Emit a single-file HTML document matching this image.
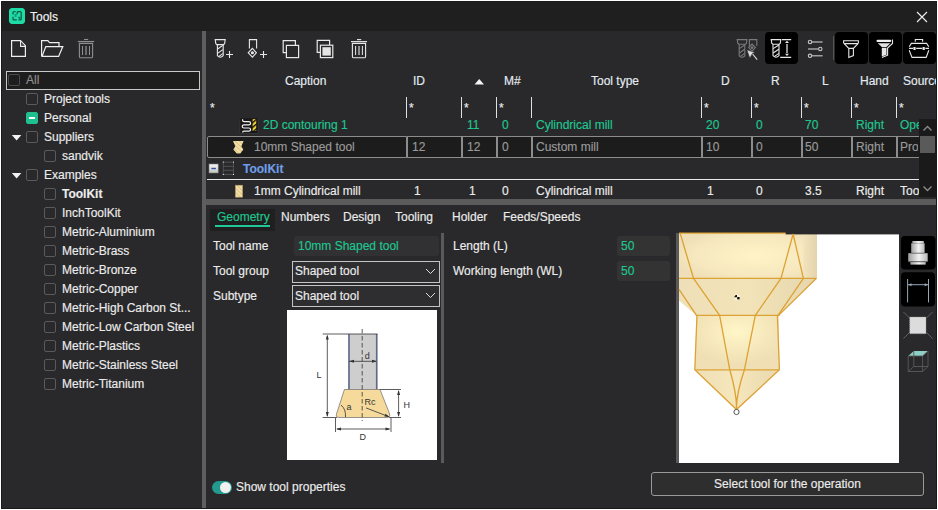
<!DOCTYPE html>
<html><head><meta charset="utf-8">
<style>
*{box-sizing:border-box;margin:0;padding:0}
html,body{width:938px;height:510px;overflow:hidden;background:#fff}
body{font-family:"Liberation Sans",sans-serif;font-size:12px;color:#ececec;position:relative;-webkit-text-stroke:0.15px}
.a{position:absolute;white-space:nowrap;line-height:14px}
#win{position:absolute;left:1px;top:1px;width:936px;height:508px;background:#1a1a1a}
#main{position:absolute;left:2px;top:2px;width:934px;height:506px;background:#29292b}
#title{position:absolute;left:2px;top:2px;width:934px;height:29px;background:#1f1f1f}
.cb{position:absolute;width:12px;height:12px;border:1px solid #5a5a5a;border-radius:2px}
.tri{position:absolute;width:0;height:0;border-left:4.5px solid transparent;border-right:4.5px solid transparent;border-top:6px solid #eee}
.vl{position:absolute;width:1px;background:#e0e0e0}
.hd{color:#e4ebf2}
.g{color:#1fc790}
.sel{position:absolute;top:136px;height:22px;border:1px solid #8c8c8c;background:#1c1c1c}
.gr{color:#9a9a9a}
</style></head><body>
<div id="win"></div>
<div id="main"></div>
<div id="title"></div>
<!-- title -->
<div style="position:absolute;left:9px;top:8px;width:16px;height:16px;border-radius:4px;background:#1fd69e"></div>
<div class="a" style="left:30px;top:10px;color:#f2f2f2">Tools</div>
<svg style="position:absolute;left:915px;top:10px" width="14" height="14"><path d="M2 2L12 12M12 2L2 12" stroke="#f0f0f0" stroke-width="1.1"/></svg>

<!-- left dividers -->
<div style="position:absolute;left:202px;top:31px;width:4px;height:477px;background:#5e5e5e"></div>

<!-- All box -->
<div style="position:absolute;left:6px;top:71px;width:194px;height:19px;border:1px solid #c8c8c8;background:#1e1e1e"></div>
<div class="cb" style="left:8px;top:74px;border-color:#4a4a4a"></div>
<div class="a" style="left:26px;top:73px;color:#8e8e8e">All</div>

<!-- tree -->
<div class="cb" style="left:26px;top:93px"></div><div class="a" style="left:44px;top:92px">Project tools</div>
<div class="cb" style="left:26px;top:112px;background:#1fbf8f;border-color:#1fbf8f"></div><div style="position:absolute;left:29px;top:117px;width:6px;height:2px;background:#fff"></div><div class="a" style="left:44px;top:111px">Personal</div>
<svg style="position:absolute;left:11px;top:134px" width="12" height="8"><path d="M0.8 1H10.4L5.6 6.4Z" fill="#f2f2f2"/></svg><div class="cb" style="left:26px;top:131px"></div><div class="a" style="left:44px;top:130px">Suppliers</div>
<div class="cb" style="left:44px;top:150px"></div><div class="a" style="left:62px;top:149px">sandvik</div>
<svg style="position:absolute;left:11px;top:172px" width="12" height="8"><path d="M0.8 1H10.4L5.6 6.4Z" fill="#f2f2f2"/></svg><div class="cb" style="left:26px;top:169px"></div><div class="a" style="left:44px;top:168px">Examples</div>
<div class="cb" style="left:44px;top:188px"></div><div class="a" style="left:62px;top:187px;font-weight:bold">ToolKit</div>
<div class="cb" style="left:44px;top:207px"></div><div class="a" style="left:62px;top:206px">InchToolKit</div>
<div class="cb" style="left:44px;top:226px"></div><div class="a" style="left:62px;top:225px">Metric-Aluminium</div>
<div class="cb" style="left:44px;top:245px"></div><div class="a" style="left:62px;top:244px">Metric-Brass</div>
<div class="cb" style="left:44px;top:264px"></div><div class="a" style="left:62px;top:263px">Metric-Bronze</div>
<div class="cb" style="left:44px;top:283px"></div><div class="a" style="left:62px;top:282px">Metric-Copper</div>
<div class="cb" style="left:44px;top:302px"></div><div class="a" style="left:62px;top:301px">Metric-High Carbon St...</div>
<div class="cb" style="left:44px;top:321px"></div><div class="a" style="left:62px;top:320px">Metric-Low Carbon Steel</div>
<div class="cb" style="left:44px;top:340px"></div><div class="a" style="left:62px;top:339px">Metric-Plastics</div>
<div class="cb" style="left:44px;top:359px"></div><div class="a" style="left:62px;top:358px">Metric-Stainless Steel</div>
<div class="cb" style="left:44px;top:378px"></div><div class="a" style="left:62px;top:377px">Metric-Titanium</div>

<!-- table header -->
<div class="a hd" style="left:285px;top:74px">Caption</div>
<div class="a hd" style="left:413px;top:74px">ID</div>
<svg style="position:absolute;left:474px;top:78px" width="11" height="7"><path d="M0.5 6.5L5.25 1L10 6.5Z" fill="#f4f4f4"/></svg>
<div class="a hd" style="left:504px;top:74px">M#</div>
<div class="a hd" style="left:591px;top:74px">Tool type</div>
<div class="a hd" style="left:721px;top:74px">D</div>
<div class="a hd" style="left:771px;top:74px">R</div>
<div class="a hd" style="left:822px;top:74px">L</div>
<div class="a hd" style="left:860px;top:74px">Hand</div>
<div class="a hd" style="left:903px;top:74px;width:33px;overflow:hidden">Source</div>

<!-- filter row -->
<div class="a" style="left:210px;top:101px;font-size:12px">*</div>
<div class="vl" style="left:406px;top:97px;height:21px"></div><div class="a" style="left:409px;top:101px;font-size:12px">*</div>
<div class="vl" style="left:461px;top:97px;height:21px"></div><div class="a" style="left:464px;top:101px;font-size:12px">*</div>
<div class="vl" style="left:496px;top:97px;height:21px"></div><div class="a" style="left:499px;top:101px;font-size:12px">*</div>
<div class="vl" style="left:531px;top:97px;height:21px"></div>
<div class="vl" style="left:701px;top:97px;height:21px"></div><div class="a" style="left:704px;top:101px;font-size:12px">*</div>
<div class="vl" style="left:751px;top:97px;height:21px"></div><div class="a" style="left:754px;top:101px;font-size:12px">*</div>
<div class="vl" style="left:801px;top:97px;height:21px"></div><div class="a" style="left:804px;top:101px;font-size:12px">*</div>
<div class="vl" style="left:851px;top:97px;height:21px"></div><div class="a" style="left:854px;top:101px;font-size:12px">*</div>
<div class="vl" style="left:896px;top:97px;height:21px"></div><div class="a" style="left:899px;top:101px;font-size:12px">*</div>

<!-- row1 -->
<div class="a g" style="left:263px;top:118px">2D contouring 1</div>
<div class="a g" style="left:467px;top:118px">11</div>
<div class="a g" style="left:502px;top:118px">0</div>
<div class="a g" style="left:536px;top:118px">Cylindrical mill</div>
<div class="a g" style="left:706px;top:118px">20</div>
<div class="a g" style="left:756px;top:118px">0</div>
<div class="a g" style="left:805px;top:118px">70</div>
<div class="a g" style="left:856px;top:118px">Right</div>
<div class="a g" style="left:900px;top:118px;width:19px;overflow:hidden">Open</div>

<!-- row2 selected -->
<div class="sel" style="left:207px;width:200px;border-radius:2px 0 0 2px"></div>
<div class="sel" style="left:407px;width:55px"></div>
<div class="sel" style="left:462px;width:35px"></div>
<div class="sel" style="left:497px;width:35px"></div>
<div class="sel" style="left:532px;width:170px"></div>
<div class="sel" style="left:702px;width:50px"></div>
<div class="sel" style="left:752px;width:50px"></div>
<div class="sel" style="left:802px;width:50px"></div>
<div class="sel" style="left:852px;width:45px"></div>
<div class="sel" style="left:897px;width:24px"></div>
<div class="a gr" style="left:254px;top:140px">10mm Shaped tool</div>
<div class="a gr" style="left:412px;top:140px">12</div>
<div class="a gr" style="left:467px;top:140px">12</div>
<div class="a gr" style="left:502px;top:140px">0</div>
<div class="a gr" style="left:536px;top:140px">Custom mill</div>
<div class="a gr" style="left:706px;top:140px">10</div>
<div class="a gr" style="left:756px;top:140px">0</div>
<div class="a gr" style="left:805px;top:140px">50</div>
<div class="a gr" style="left:856px;top:140px">Right</div>
<div class="a gr" style="left:900px;top:140px;width:18px;overflow:hidden">Pro</div>

<!-- ToolKit group row -->
<div class="a" style="left:243px;top:162px;color:#6f9ee8;font-weight:bold">ToolKit</div>
<div style="position:absolute;left:207px;top:179px;width:712px;height:1px;background:#e8e8e8"></div>

<!-- row4 -->
<div class="a" style="left:254px;top:184px">1mm Cylindrical mill</div>
<div class="a" style="left:414px;top:184px">1</div>
<div class="a" style="left:469px;top:184px">1</div>
<div class="a" style="left:502px;top:184px">0</div>
<div class="a" style="left:536px;top:184px">Cylindrical mill</div>
<div class="a" style="left:707px;top:184px">1</div>
<div class="a" style="left:756px;top:184px">0</div>
<div class="a" style="left:805px;top:184px">3.5</div>
<div class="a" style="left:856px;top:184px">Right</div>
<div class="a" style="left:900px;top:184px;width:19px;overflow:hidden">Tool</div>

<!-- scrollbar -->
<div style="position:absolute;left:919px;top:119px;width:17px;height:78px;background:#1a1a1a"></div>
<div style="position:absolute;left:920px;top:136px;width:15px;height:17px;background:#5a5a5a"></div>
<svg style="position:absolute;left:919px;top:119px" width="17" height="78"><path d="M4.5 11.5L8.5 7.5L12.5 11.5M4.5 67.5L8.5 71.5L12.5 67.5" fill="none" stroke="#8a8a8a" stroke-width="1.4"/></svg>

<!-- splitter -->
<div style="position:absolute;left:206px;top:199px;width:730px;height:6px;background:#5b5b5b"></div>

<!-- tabs -->
<div style="position:absolute;left:210px;top:209px;width:65px;height:22px;background:#1f1f1f"></div>
<div style="position:absolute;left:215px;top:225px;width:55px;height:2px;background:#20c997"></div>
<div class="a g" style="left:217px;top:210px">Geometry</div>
<div class="a" style="left:281px;top:210px">Numbers</div>
<div class="a" style="left:343px;top:210px">Design</div>
<div class="a" style="left:395px;top:210px">Tooling</div>
<div class="a" style="left:452px;top:210px">Holder</div>
<div class="a" style="left:503px;top:210px">Feeds/Speeds</div>

<!-- form -->
<div class="a" style="left:213px;top:239px">Tool name</div>
<div style="position:absolute;left:294px;top:236px;width:145px;height:20px;background:#313133;border-radius:3px"></div>
<div class="a g" style="left:298px;top:239px">10mm Shaped tool</div>
<div class="a" style="left:213px;top:264px">Tool group</div>
<div style="position:absolute;left:292px;top:261px;width:148px;height:22px;border:1px solid #c4c4c4;background:#2e2e30"></div>
<div class="a" style="left:295px;top:264px">Shaped tool</div>
<svg style="position:absolute;left:425px;top:268px" width="11" height="7"><path d="M1 1L5.5 5.5L10 1" fill="none" stroke="#ddd" stroke-width="1"/></svg>
<div class="a" style="left:213px;top:289px">Subtype</div>
<div style="position:absolute;left:292px;top:285px;width:148px;height:22px;border:1px solid #c4c4c4;background:#2e2e30"></div>
<div class="a" style="left:295px;top:289px">Shaped tool</div>
<svg style="position:absolute;left:425px;top:292px" width="11" height="7"><path d="M1 1L5.5 5.5L10 1" fill="none" stroke="#ddd" stroke-width="1"/></svg>

<div style="position:absolute;left:287px;top:310px;width:150px;height:150px;background:#fff"></div>
<div style="position:absolute;left:441px;top:233px;width:3px;height:230px;background:#5a5a5a"></div>

<div class="a" style="left:453px;top:239px">Length (L)</div>
<div class="a" style="left:453px;top:264px">Working length (WL)</div>
<div style="position:absolute;left:617px;top:236px;width:53px;height:20px;background:#333;border-radius:3px"></div>
<div style="position:absolute;left:617px;top:261px;width:53px;height:20px;background:#333;border-radius:3px"></div>
<div class="a g" style="left:621px;top:239px">50</div>
<div class="a g" style="left:621px;top:264px">50</div>

<!-- 3d view -->
<div style="position:absolute;left:676px;top:233px;width:3px;height:230px;background:#5a5a5a"></div>
<div style="position:absolute;left:679px;top:233px;width:220px;height:230px;background:#fff"></div>


<!-- DRAWINGS -->
<svg style="position:absolute;left:0;top:0" width="938" height="510">
 <defs>
  <radialGradient id="gTop" cx="0.55" cy="0.5" r="0.6">
   <stop offset="0" stop-color="#fff4c6"/><stop offset="0.7" stop-color="#f7e8bf"/><stop offset="1" stop-color="#efdfb8"/>
  </radialGradient>
  <linearGradient id="gRight" x1="0" y1="0" x2="1" y2="0"><stop offset="0" stop-color="#f2e3bc"/><stop offset="1" stop-color="#e4d4ae"/></linearGradient>
  <linearGradient id="gTaper" x1="0" y1="0" x2="1" y2="0">
   <stop offset="0" stop-color="#eedfb8"/><stop offset="0.5" stop-color="#f3e3b8"/><stop offset="1" stop-color="#e6d6ae"/>
  </linearGradient>
  <radialGradient id="gCyl" cx="0.5" cy="0.3" r="0.6">
   <stop offset="0" stop-color="#fff6c8"/><stop offset="1" stop-color="#f0dfb4"/>
  </radialGradient>
  <linearGradient id="gCone" x1="0" y1="0" x2="1" y2="0">
   <stop offset="0" stop-color="#efdfb6"/><stop offset="0.5" stop-color="#f6e6bc"/><stop offset="1" stop-color="#e9d8ae"/>
  </linearGradient>
 </defs>
 <!-- 3D tool -->
 <path d="M679 233H817V278.3H679Z" fill="url(#gTop)"/>
 <path d="M803.4 233H817V278.3H803.4Z" fill="url(#gRight)"/>
 <path d="M679 278.3H816.4L778.6 315.4H696.5L679 300.6Z" fill="url(#gTaper)"/>
 <path d="M696.5 315.4H778.6L779.4 369.8H694.8Z" fill="url(#gCyl)"/>
 <path d="M694.8 369.8H779.4L736.5 409.5Z" fill="url(#gCone)"/>
 <rect x="785.6" y="228" width="114" height="6.4" fill="#29292b"/>
 <g stroke="#dca233" stroke-width="1.3" fill="none">
  <path d="M679 233.2H785.6"/>
  <path d="M680.1 233L693.5 278.3M793.1 234L781 278.3M793.1 234L803.4 278.3"/>
  <path d="M679 278.3H816.4"/>
  <path d="M679 289.4L696.5 315.4M693.5 278.3L719.6 315.4M781 278.3L755.3 315.4M803.4 278.3L778 315.4M816.4 278.3L778.6 315.4"/>
  <path d="M696 315.4H779.4"/>
  <path d="M697 315.4L694.8 369.8M777.4 315.4L779.4 369.8M719.6 315.4L729.8 369.8M755.3 315.4L744.4 369.8"/>
  <path d="M694.8 369.8H779.4"/>
  <path d="M694.8 369.8L736.5 409.5L779.4 369.8M729.8 369.8Q737 395 736.5 409.5M744.4 369.8Q736 395 736.5 409.5"/>
 </g>
 <circle cx="736.5" cy="412" r="2.6" fill="#fff" stroke="#555" stroke-width="1"/>
 <circle cx="737" cy="297.2" r="3.2" fill="#fff8e0" opacity="0.7"/><path d="M734 297.2L735.6 295H737V297.2Z" fill="#111"/><rect x="737.2" y="297" width="2.4" height="2.4" fill="#111"/>

 <!-- schematic -->
 <rect x="348.2" y="334" width="29.3" height="55.5" fill="#cecece"/>
 <path d="M349 334V389.5M376.7 334V389.5" stroke="#5e6a86" stroke-width="1.6"/>
 <path d="M344.4 389.5H380L388.5 411Q391.5 417.5 387 417.5H339Q334.5 417.5 337.5 411Z" fill="#f6da9c" stroke="#6a6a6a" stroke-width="0.7"/>
 <g stroke="#333" stroke-width="0.8" fill="none">
  <path d="M322.7 334H377.5"/>
  <path d="M327.3 336V416"/>
  <path d="M322.7 417.5H337"/>
  <path d="M380 389.5H401M389 417.5H401"/>
  <path d="M398.6 391V416"/>
  <path d="M335.5 418V432M391 418V432"/>
  <path d="M337 429H389.5"/>
  <path d="M349.5 361.3H376"/>
  <path d="M362.2 329V421" stroke-dasharray="4.5 2.5"/>
  <path d="M366 407.9L389 416.8"/>
  <path d="M341 405Q346 409 345.5 417"/>
 </g>
 <g fill="#333">
  <path d="M327.3 334.5L325.8 339.5H328.8Z M327.3 417L325.8 412H328.8Z"/>
  <path d="M398.6 390L397.1 395H400.1Z M398.6 417L397.1 412H400.1Z"/>
  <path d="M336 429L341 427.5V430.5Z M390.5 429L385.5 427.5V430.5Z"/>
  <path d="M349 361.3L354 359.8V362.8Z M377 361.3L372 359.8V362.8Z"/>
  <path d="M389.5 417L384.4 416.6L385.5 413.8Z"/>
 </g>
 <g font-family="Liberation Sans, sans-serif" font-size="9" fill="#333">
  <text x="364.8" y="359">d</text>
  <text x="316.6" y="378">L</text>
  <text x="403.5" y="408">H</text>
  <text x="359.5" y="439.5">D</text>
  <text x="346.5" y="409.5">a</text>
  <text x="364.5" y="404.5">Rc</text>
 </g>
</svg>
<!-- right side buttons -->


<svg style="position:absolute;left:0;top:0" width="938" height="510" fill="none">
 <defs>
  <pattern id="stripe" width="3" height="3" patternUnits="userSpaceOnUse" patternTransform="rotate(-45)">
   <rect width="3" height="3" fill="#f3dea6"/><rect width="1" height="3" fill="#dcc48a"/>
  </pattern>
  <pattern id="ystripe" width="3.6" height="4" patternUnits="userSpaceOnUse" patternTransform="rotate(50)">
   <rect width="4" height="4" fill="#f4d430"/><rect width="1.4" height="4" fill="#111"/>
  </pattern>
  <linearGradient id="metal" x1="0" y1="0" x2="1" y2="0">
   <stop offset="0" stop-color="#9e9e9e"/><stop offset="0.55" stop-color="#f2f2f2"/><stop offset="1" stop-color="#b8b8b8"/>
  </linearGradient>
  <linearGradient id="mbox" x1="0" y1="0" x2="0" y2="1">
   <stop offset="0" stop-color="#f6f6f6"/><stop offset="1" stop-color="#c4c4c4"/>
  </linearGradient>
 </defs>
 <!-- 2D contouring icon -->
 <rect x="239.5" y="118.4" width="19" height="15.6" fill="#171717"/>
 <path d="M239.8 119V133.6H258.2V119" stroke="#404040" stroke-width="0.8"/>
 <path d="M242.6 119.3V120.3Q242.6 121.6 244 121.6H248.8Q250.6 121.6 250.6 123.3Q250.6 124.9 248.8 124.9H244Q242.2 124.9 242.2 126.5Q242.2 128 244 128H248.8Q250.6 128 250.6 129.6Q250.6 131.2 248.8 131.2H244Q242.6 131.2 242.6 132.4" stroke="#f4f4f4" stroke-width="1.2"/>
 <rect x="252.6" y="119.2" width="3.6" height="11.8" fill="url(#ystripe)"/>
 <!-- shaped tool icon -->
 <path d="M233 141H243.6L241.4 146.2L243.3 149.6L240.3 153.5H236.8L233.3 149.6L235.3 146.2Z" fill="url(#stripe)"/>
 <!-- minus box -->
 <rect x="209" y="164" width="9.2" height="9" fill="url(#mbox)" stroke="#7a7a7a" stroke-width="0.6"/>
 <path d="M211.4 168.5H215.9" stroke="#2f4fa8" stroke-width="1.4"/>
 <!-- table icon -->
 <path d="M223.3 162V174.5M233.4 162V174.5M223.3 162.2H233.4M223.3 166.3H233.4M223.3 170.3H233.4M223.3 174.4H233.4" stroke="#5a5a5a" stroke-width="0.8"/>
 <g fill="#e8e8e8"><rect x="222.8" y="161.6" width="1" height="1"/><rect x="233" y="161.6" width="1" height="1"/><rect x="222.8" y="174" width="1" height="1"/><rect x="233" y="174" width="1" height="1"/></g>
 <!-- cyl mill icon -->
 <rect x="235.4" y="185.2" width="7.2" height="12" fill="url(#stripe)" stroke="#b49a68" stroke-width="0.6"/>

 <!-- right view buttons -->
 <rect x="901" y="236" width="34.5" height="33.5" rx="4" fill="#000"/>
 <rect x="901" y="272.2" width="34" height="34.3" rx="4" fill="#000"/>
 <rect x="912.3" y="241" width="11.5" height="2" fill="url(#metal)"/>
 <rect x="911.2" y="243.2" width="13.4" height="9.8" fill="url(#metal)"/>
 <rect x="908.2" y="253.2" width="19.5" height="8.4" fill="url(#metal)"/>
 <rect x="910.4" y="262" width="15.3" height="2.6" fill="url(#metal)"/>
 <path d="M911.2 253.1H924.6M908.2 261.8H927.7" stroke="#555" stroke-width="0.6"/>
 <g stroke="#98a6b6" stroke-width="1">
  <path d="M907.6 279V302.4M928.5 279V302.4M908 284.7H928"/>
 </g>
 <path d="M908.2 284.7L911.5 283.2V286.2Z M928 284.7L924.7 283.2V286.2Z" fill="#98a6b6"/>
 <!-- square view -->
 <path d="M903.5 312L909.5 318M932.5 312L926.5 318M903.5 338.5L909.5 332.5M932.5 338.5L926.5 332.5" stroke="#666" stroke-width="0.9"/>
 <rect x="909.7" y="317" width="16.3" height="16.7" fill="#dcdcdc" stroke="#9a9a9a" stroke-width="0.7" stroke-dasharray="1 1"/>
 <!-- cube -->
 <path d="M908.2 356L913.8 351H928L922.6 356Z" fill="#8ecfc6"/>
 <g stroke="#5a5a5a" stroke-width="0.9">
  <path d="M908.2 356H922.6V371.5H908.2Z M922.6 356L928 351V366.5L922.6 371.5 M928 366.5H913.8L908.2 371.5 M913.8 351V366.5"/>
 </g>
</svg>
<!-- bottom -->
<div style="position:absolute;left:212px;top:481px;width:20px;height:13px;border-radius:7px;background:#249a8f"></div>
<div style="position:absolute;left:220px;top:482px;width:11px;height:11px;border-radius:6px;background:#f0f0f0"></div>
<div class="a" style="left:236px;top:480px">Show tool properties</div>
<div style="position:absolute;left:651px;top:472px;width:273px;height:24px;border:1px solid #9a9a9a;border-radius:3px;background:#2e2e2e"></div>
<div class="a" style="left:651px;top:477px;width:273px;text-align:center">Select tool for the operation</div>

<!-- right toolbar -->
<div style="position:absolute;left:765px;top:32px;width:33px;height:32px;background:#000;border-radius:4px"></div>
<div style="position:absolute;left:835px;top:32px;width:33px;height:32px;background:#000;border-radius:4px"></div>
<div style="position:absolute;left:869px;top:32px;width:33px;height:32px;background:#000;border-radius:4px"></div>
<div style="position:absolute;left:903px;top:32px;width:33px;height:32px;background:#000;border-radius:4px"></div>
<div style="position:absolute;left:833px;top:36px;width:1px;height:24px;background:#555"></div>

<!-- ICONS -->
<svg style="position:absolute;left:0;top:0" width="938" height="510" fill="none" stroke-linejoin="miter">
 <!-- app icon -->
 <rect x="9" y="8" width="16" height="16" rx="4" fill="#1ddca6" stroke="none"/>
 <path d="M13 14.4V12.5Q13 11.6 14 11.6H15.6M13 16.8V19Q13 19.9 14 19.9H16.8M17.2 14.2V12.5Q17.2 11.6 18.2 11.6H20.2Q21.2 11.6 21.2 12.6V19Q21.2 19.9 20.2 19.9H18.4M18.6 17L20.1 18.5" stroke="#0f5a44" stroke-width="1.25"/>
 <rect x="14.6" y="14" width="2" height="3" fill="#159a74" stroke="none"/>
 <!-- new file -->
 <path d="M11.6 40.6H20.5L25.4 45.8V56.4H11.6Z" stroke="#eeeeee" stroke-width="1.2"/>
 <path d="M20.6 41V46.4H25" stroke="#eeeeee" stroke-width="1.1"/>
 <path d="M21.2 41.8L24.6 45.7H21.2Z" fill="#555" stroke="none"/>
 <!-- folder -->
 <path d="M41.6 56.4V40.6H47.8L49.6 42.6H59V46.4" stroke="#eeeeee" stroke-width="1.2"/>
 <path d="M41.6 56.4H58.6L62.8 46.6H45.8L42.2 56" stroke="#eeeeee" stroke-width="1.2"/>
 <!-- trash left -->
 <g stroke="#8f8f8f">
 <path d="M84 39.5H88.2" stroke-width="1.1"/>
 <path d="M77.8 41.5H94.2" stroke-width="1.1"/>
 <path d="M79.4 43.4H92.6V56.4Q92.6 57.8 91.2 57.8H80.8Q79.4 57.8 79.4 56.4Z" stroke-width="1.1"/>
 <path d="M82.5 46V55M89.5 46V55" stroke-width="1"/>
 <path d="M86 46V55" stroke="#6a6a6a" stroke-width="2"/>
 </g>

 <!-- right toolbar left icons -->
 <!-- mill + -->
 <g stroke="#e8e8e8" stroke-width="1.1">
 <path d="M215.2 39.6H225.2L224.6 43.6L223.4 44.6H217L215.8 43.6Z"/>
 <path d="M217.4 44.6V55.6Q220.3 58.8 223.2 55.6V44.6"/>
 <path d="M217.6 49L222.8 45.4M217.6 53.4L222.8 49.6M218.6 56.6L222.8 53.6"/>
 <path d="M226 54.5H233M229.5 51V58"/>
 </g>
 <!-- insert + -->
 <g stroke="#e8e8e8" stroke-width="1.1">
 <path d="M249.4 48.5V39.6H256.6V48.5"/>
 <path d="M252.4 48.4L256.4 52.8L252.4 57.2L248.2 52.8Z"/>
 <circle cx="252.4" cy="52.8" r="1" fill="#e8e8e8"/>
 <path d="M260 54.5H267M263.5 51V58"/>
 </g>
 <!-- copy -->
 <g stroke="#e8e8e8" stroke-width="1.2">
 <path d="M286 52.6H283.2V40.6H295.4V45.2"/>
 <rect x="286.4" y="45.4" width="12.2" height="12.2" fill="#29292b"/>
 </g>
 <!-- copy filled -->
 <g stroke="#e8e8e8" stroke-width="1.2">
 <path d="M320 52.4H317.2V40.4H329.6V45"/>
 <rect x="320.4" y="45.2" width="12.4" height="12.4" fill="#29292b"/>
 <rect x="322.4" y="47.2" width="8.4" height="8.4" fill="#e4e4e4" stroke="none"/>
 </g>
 <!-- trash right -->
 <g stroke="#e8e8e8">
 <path d="M357 39.6H361.2" stroke-width="1.1"/>
 <path d="M351 41.6H367" stroke-width="1.1"/>
 <path d="M352.4 43.4H365.6V56.4Q365.6 57.8 364.2 57.8H353.8Q352.4 57.8 352.4 56.4Z" stroke-width="1.1"/>
 <path d="M355.6 46V55M362.4 46V55" stroke-width="1"/>
 <path d="M359 46V55" stroke="#909090" stroke-width="2"/>
 </g>

 <!-- grey mill+cursor -->
 <g stroke="#7a7a7a" stroke-width="1.1">
 <path d="M737.2 39.6H747L746.4 43.4L745.4 44.2H738.8L737.8 43.4Z"/>
 <path d="M739.2 44.2V55.8Q742 58.6 744.8 55.8V44.2"/>
 <path d="M739.4 48.6L744.6 45M739.4 53L744.6 49.2M740.4 56.4L744.6 53.4"/>
 <path d="M749.4 46V39.6H756.8V46"/>
 <path d="M752 44L755.4 47.6L752 51.2L748.6 47.6Z"/>
 <circle cx="752" cy="47.6" r="0.9" fill="#7a7a7a"/>
 </g>
 <path d="M746.8 49.8L755.2 52.6L752.4 53.6L749.8 58.2Z" fill="#dcdcdc" stroke="#282828" stroke-width="0.6"/>
 <path d="M752.6 54L757.2 59.6" stroke="#dcdcdc" stroke-width="1.1"/>

 <!-- black btn1 icon: mill + dim -->
 <g stroke="#e8e8e8" stroke-width="1.1">
 <path d="M771.2 39.6H780.8L780.2 43.4L779 44.2H773L771.8 43.4Z"/>
 <path d="M773 44.2V55.6Q776 58.8 779 55.6V44.2"/>
 <path d="M773.2 48.6L778.8 45M773.2 53L778.8 49.2M774.2 56.6L778.8 53.4"/>
 <path d="M782 39.6H791.2M780.2 57.4H791.2"/>
 </g>
 <path d="M787 40.8L789 43H785Z M787 56L789 53.8H785Z" fill="#e8e8e8"/>
 <path d="M787 44V53" stroke="#909090" stroke-width="2"/>

 <!-- sliders -->
 <g stroke="#c8c8c8">
 <path d="M812 42H822.6M808 49H818M812 55.8H822.6" stroke="#a0a0a0" stroke-width="1.6"/>
 <circle cx="810" cy="42" r="1.7" fill="#29292b" stroke-width="1.1"/>
 <circle cx="820.3" cy="49" r="1.7" fill="#29292b" stroke-width="1.1"/>
 <circle cx="810" cy="55.8" r="1.7" fill="#29292b" stroke-width="1.1"/>
 </g>

 <!-- funnel 1 -->
 <g stroke="#e8e8e8" stroke-width="1.1">
 <path d="M843.6 40.8H858.4V42.8L857.6 43.6H844.4L843.6 42.8Z"/>
 <path d="M844.2 43.6L848.8 48.4H853.4L858 43.6"/>
 <path d="M848.8 48.4V57.4L853.4 55.6V48.4"/>
 </g>
 <!-- funnel 2 filled -->
 <path d="M877.6 40.9H890.2" stroke="#f0f0f0" stroke-width="2.2" stroke-linecap="round"/>
 <path d="M877.8 43.3H890.3L886.5 47H881.8Z" fill="#e2e2e2"/>
 <path d="M881.8 47.8H886.5V54.8L881.8 56.4Z" fill="#e6e6e6"/>
 <path d="M892.5 39.6V43.4L887.6 48V55.2L882 57.6" stroke="#e8e8e8" stroke-width="1.1"/>
 <!-- toolbox -->
 <g stroke="#e8e8e8" stroke-width="1.1">
 <path d="M915.3 41.8V39.5H922.6V41.8"/>
 <path d="M909.2 46.8L911.4 43.4H926.6L928.8 46.8"/>
 <path d="M909.2 50.2L912 57.4H926.2L928.8 50.2"/>
 <path d="M909 48.4H913M916.2 48.4H922.2M925.4 48.4H929"/>
 <rect x="913.4" y="47" width="2.2" height="3" fill="#e8e8e8" stroke="none"/>
 <rect x="922.6" y="47" width="2.2" height="3" fill="#e8e8e8" stroke="none"/>
 </g>
</svg>
</body></html>
